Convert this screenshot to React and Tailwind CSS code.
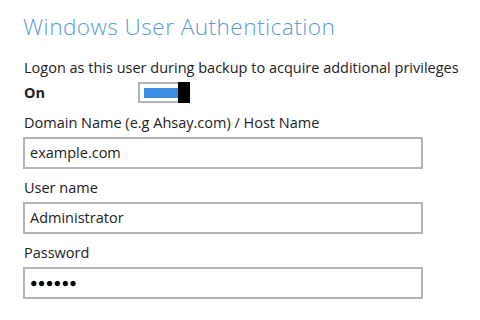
export default function App(){
  const font = { fontFamily: '"Open Sans", "Liberation Sans", sans-serif' };
  return (
    <div className="w-[480px] h-[320px] bg-white pt-[12px] pl-[23px] text-[#222]" style={font}>
      <h1 className="text-[22.6px] leading-[30px] text-[#5b9bd8] font-light tracking-[0.45px]">Windows User Authentication</h1>
      <p className="mt-[16px] text-[14.5px] leading-[20px] pl-px">Logon as this user during backup to acquire additional privileges</p>

      <div className="mt-[4px] h-[21px] flex items-center">
        <div className="w-[115px] text-[14.5px] font-bold pl-px">On</div>
        <div className="flex h-[21px]">
          <div className="w-[40px] border-2 border-r-0 border-[#b3b3b3] pt-[4px] pb-[3px] pl-[4px]">
            <div className="h-[10px] bg-[#3b8ee4]"></div>
          </div>
          <div className="w-[12px] bg-black"></div>
        </div>
      </div>

      <Field label="Domain Name (e.g Ahsay.com) / Host Name" value="example.com" first />
      <Field label="User name" value="Administrator" />
      <Field label="Password" value="●●●●●●" password />
    </div>
  );
}

function Field({ label, value, first, password }){
  return (
    <div>
      <div className={`${first ? "mt-[10px]" : "mt-[9px]"} text-[14.5px] leading-[20px] pl-px`}>{label}</div>
      <div className="mt-[4px] w-[400px] h-[32px] border-2 border-[#b4b4b4] flex items-center pl-[5px]">
        {password
          ? <span className="text-[12.5px] tracking-[0.3px] text-black">{value}</span>
          : <span className="text-[14.5px] text-[#222]">{value}</span>}
      </div>
    </div>
  );
}
